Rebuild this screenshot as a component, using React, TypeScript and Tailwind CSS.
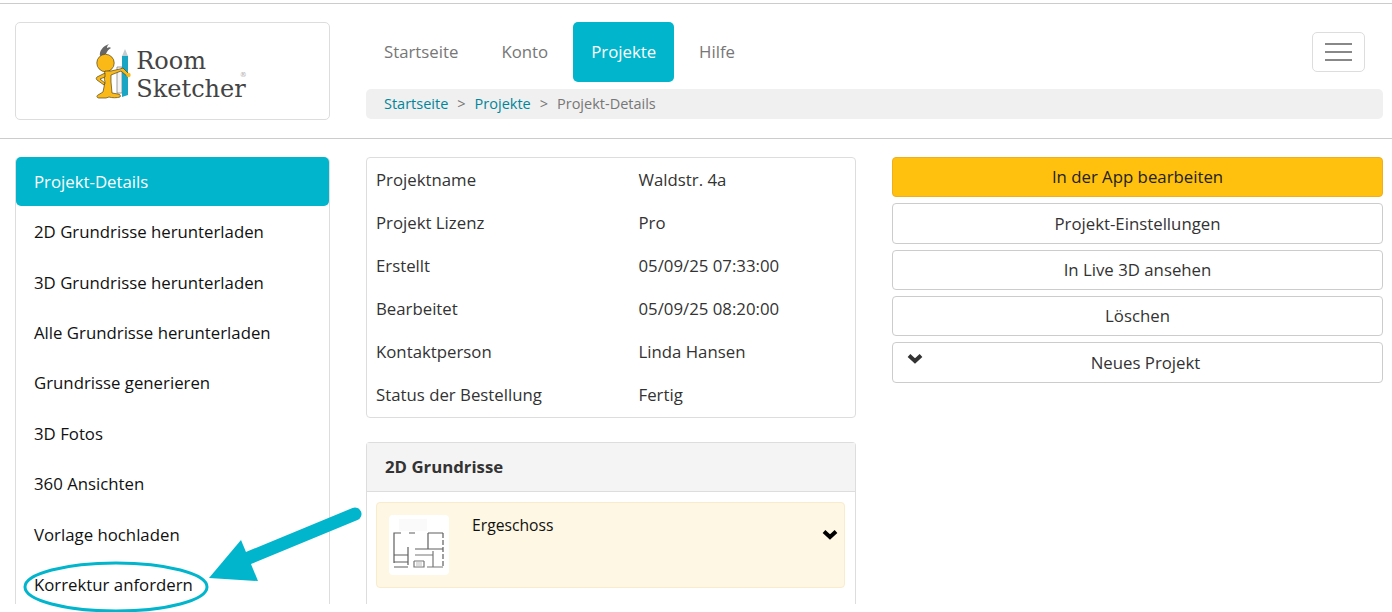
const navItems = ["Startseite", "Konto", "Projekte", "Hilfe"];

const sideItems = [
  "2D Grundrisse herunterladen",
  "3D Grundrisse herunterladen",
  "Alle Grundrisse herunterladen",
  "Grundrisse generieren",
  "3D Fotos",
  "360 Ansichten",
  "Vorlage hochladen",
  "Korrektur anfordern",
];

const details = [
  ["Projektname", "Waldstr. 4a"],
  ["Projekt Lizenz", "Pro"],
  ["Erstellt", "05/09/25 07:33:00"],
  ["Bearbeitet", "05/09/25 08:20:00"],
  ["Kontaktperson", "Linda Hansen"],
  ["Status der Bestellung", "Fertig"],
];

function Chevron({ className }: { className?: string }) {
  return (
    <svg viewBox="0 0 16 11" className={className} fill="none">
      <path d="M2 2.500 8 8 14 2.500" stroke="currentColor" strokeWidth="4" />
    </svg>
  );
}

function Mascot() {
  return (
    <svg viewBox="95 42 36 56" className="h-[56px] w-[36px] shrink-0">
      <path d="M100 55c-1-5 3-10 9-12-2 2-2 3-2 4 2-1 3-1 4 0-2 1-4 3-5 6z" fill="#666" />
      <path d="M117 66h5v26h-5z" fill="#f4f4f4" stroke="#777" strokeWidth="0.7" />
      <path d="M122 55l3-7 3 7z" fill="#c4cdd0" />
      <path d="M122 55h6v39l-6 2z" fill="#1aa5c4" />
      <circle cx="105.500" cy="62" r="8.700" fill="#fbb917" stroke="#4f4420" strokeWidth="0.7" />
      <path d="M105 70c-1 4-1 8 0 11l-2 10-5 3c-2 1-1 3 1 3h7l3-1c3 1 8 1 11 0 1-1 0-3-2-3l-6-1-1-11v-7l10-4 7 6 2-2-7-7-3 1-9 2z" fill="#fbb917" stroke="#4f4420" strokeWidth="0.7" />
      <path d="M105 72l-8 4c-1 1-1 2 0 3l7 5 1-2-5-4 5-2z" fill="#fbb917" stroke="#4f4420" strokeWidth="0.7" />
      <circle cx="128.500" cy="74" r="2.200" fill="#fbb917" />
    </svg>
  );
}

function FloorPlan() {
  return (
    <svg viewBox="0 0 60 60" className="h-[60px] w-[60px]" fill="none" stroke="#5f5f5f" strokeWidth="1.200">
      <rect x="10" y="4" width="28" height="12" fill="#fafafa" stroke="none" />
      <path d="M5 48V18h7M20 18h6M39 18h15M39 18v16M26 34h28" />
      <path d="M54 18v34" strokeDasharray="5 2" />
      <path d="M19 32v18M5 40h14M5 47h14M5 52h14" />
      <path d="M26 40h18M44 36v16M38 52h16M25 46h10M25 46v6h10v-6" stroke="#777" />
      <rect x="27" y="47" width="6" height="4" fill="#ddd" stroke="none" />
    </svg>
  );
}

export default function App() {
  return (
    <div className="relative h-[612px] w-[1392px] overflow-hidden bg-white font-['Open_Sans',sans-serif] text-[16.800px] text-[#333]">
      <header className="mt-[3px] flex h-[136px] border-y border-[#ccc] pl-[15px]">
        <div className="mt-[18px] flex h-[98px] w-[315px] items-center justify-center gap-[5px] rounded-[5px] border border-[#ddd] pr-[4px]">
          <Mascot />
          <div className="relative pt-[8px] font-['DejaVu_Serif',serif] text-[24px] leading-[28px] text-[#444]">
            Room
            <br />
            Sketcher
            <span className="absolute right-[-1px] top-[32px] text-[7px] leading-[8px] text-[#aaa]">®</span>
          </div>
        </div>
        <div className="ml-[36px] mt-[18px] w-[1017px]">
          <div className="flex h-[60px] items-start">
            <nav className="flex gap-[7px]">
              {navItems.map((item) =>
                item === "Projekte" ? (
                  <a key={item} className="flex h-[60px] items-center rounded-[5px] bg-[#00b5cc] px-[18px] text-white">
                    {item}
                  </a>
                ) : (
                  <a key={item} className="flex h-[60px] items-center px-[18px] text-[#777]">
                    {item}
                  </a>
                ),
              )}
            </nav>
            <button className="ml-auto mr-[18px] mt-[10px] flex h-[40px] w-[53px] flex-col items-center justify-center gap-[6px] rounded-[5px] border border-[#ddd]">
              <span className="h-[2px] w-[27px] bg-[#888]" />
              <span className="h-[2px] w-[27px] bg-[#888]" />
              <span className="h-[2px] w-[27px] bg-[#888]" />
            </button>
          </div>
          <div className="mt-[7px] flex h-[30px] items-center rounded-[5px] bg-[#f0f0f0] pb-[1px] pl-[18px] text-[14.500px] text-[#777]">
            <a className="text-[#00869a]">Startseite</a>
            <span className="mx-[9px]">&gt;</span>
            <a className="text-[#00869a]">Projekte</a>
            <span className="mx-[9px]">&gt;</span>
            <span>Projekt-Details</span>
          </div>
        </div>
      </header>

      <main className="mt-[18px] flex h-[447px] overflow-hidden pl-[15px]">
        <aside className="h-full w-[315px] rounded-t-[5px] border-x border-[#ddd]">
          <div className="flex h-[49px] items-center rounded-[5px] bg-[#00b5cc] pl-[18px] text-white">
            Projekt-Details
          </div>
          <ul className="pt-[0.600px] text-[#111]">
            {sideItems.map((item) => (
              <li key={item} className="flex h-[50.400px] items-center pl-[18px]">
                {item}
              </li>
            ))}
          </ul>
        </aside>

        <section className="ml-[36px] w-[490px]">
          <div className="flex h-[261px] flex-col justify-center rounded-[4px] border border-[#ddd] pl-[9px]">
            {details.map(([label, value]) => (
              <div key={label} className="flex h-[43px] items-center">
                <span className="w-[262.500px]">{label}</span>
                <span>{value}</span>
              </div>
            ))}
          </div>
          <div className="mt-[24px] h-[200px] rounded-t-[4px] border-x border-t border-[#ddd]">
            <div className="flex h-[49px] items-center border-b border-[#ddd] bg-[#f4f4f4] pl-[18px] font-bold">
              2D Grundrisse
            </div>
            <div className="relative ml-[9px] mr-[10px] mt-[10px] flex h-[86px] rounded-[4px] border border-[#faebcc] bg-[#fdf7e3] pl-[12px] pt-[12px]">
              <div className="h-[60px] w-[60px] rounded-[4px] bg-white">
                <FloorPlan />
              </div>
              <span className="ml-[23px] mt-[-1px] h-[24px] text-[15.700px] text-[#111]">Ergeschoss</span>
              <Chevron className="absolute right-[6px] top-[26px] h-[11px] w-[16px] text-black" />
            </div>
          </div>
        </section>

        <section className="ml-[36px] flex w-[491px] flex-col gap-[6px]">
          <button className="h-[40px] rounded-[4px] border border-[#f0ad1e] bg-[#ffc10e] text-[#222]">
            In der App bearbeiten
          </button>
          <button className="h-[41px] rounded-[4px] border border-[#ccc]">Projekt-Einstellungen</button>
          <button className="h-[40px] rounded-[4px] border border-[#ccc]">In Live 3D ansehen</button>
          <button className="h-[40px] rounded-[4px] border border-[#ccc]">Löschen</button>
          <button className="relative h-[41px] rounded-[4px] border border-[#ccc] pl-[16px]">
            <Chevron className="absolute left-[14px] top-[10px] h-[11px] w-[16px] text-[#333]" />
            Neues Projekt
          </button>
        </section>
      </main>

      <svg className="pointer-events-none absolute left-0 top-0 h-[612px] w-[1392px]" viewBox="0 0 1392 612" fill="none">
        <ellipse cx="116" cy="587" rx="91" ry="24" stroke="#00b5cc" strokeWidth="3" />
        <path d="M355 514 246 559" stroke="#00b5cc" strokeWidth="13" strokeLinecap="round" />
        <path d="M209 578 241 540 258 581Z" fill="#00b5cc" />
      </svg>
    </div>
  );
}
